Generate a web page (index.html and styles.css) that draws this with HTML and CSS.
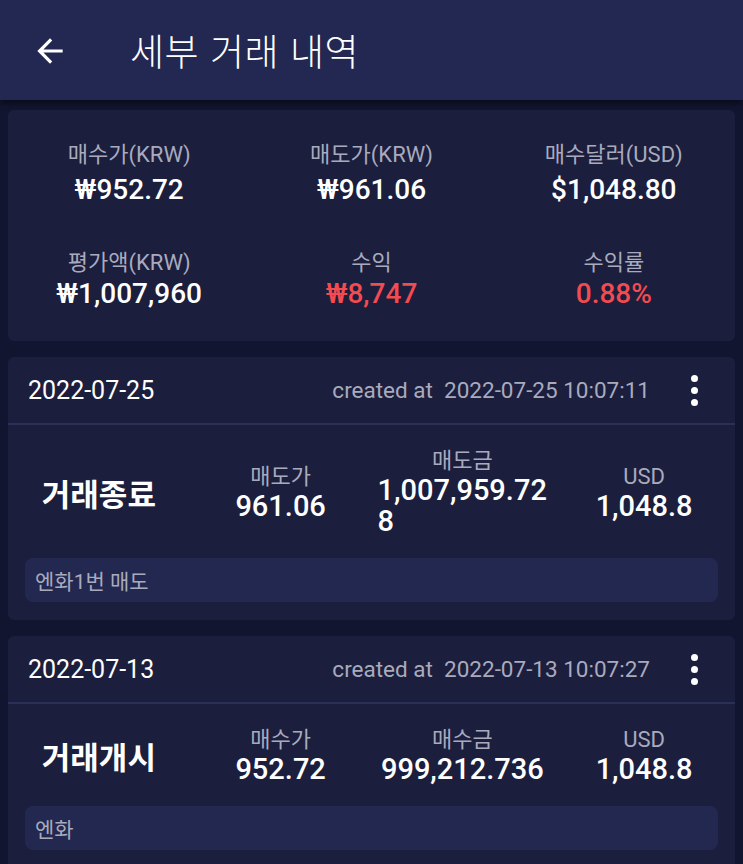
FILE: index.html
```html
<!DOCTYPE html>
<html lang="ko">
<head>
    <meta charset="UTF-8">
    <meta name="viewport" content="width=device-width, initial-scale=1.0">
    <title>세부 거래 내역</title>
    <link rel="stylesheet" href="styles.css">
</head>
<body>
    <div class="appbar">
        <svg class="back" width="38" height="38" viewBox="0 0 24 24">
            <path d="M20 11H7.83l5.59-5.59L12 4l-8 8 8 8 1.41-1.41L7.83 13H20v-2z" fill="#fff"/>
        </svg>
        <h1 class="title">세부 거래 내역</h1>
    </div>

    <div class="page">
        <div class="card summary">
            <div class="stat">
                <span class="label">매수가(KRW)</span>
                <span class="value">₩952.72</span>
            </div>
            <div class="stat">
                <span class="label">매도가(KRW)</span>
                <span class="value">₩961.06</span>
            </div>
            <div class="stat">
                <span class="label">매수달러(USD)</span>
                <span class="value">$1,048.80</span>
            </div>
            <div class="stat">
                <span class="label">평가액(KRW)</span>
                <span class="value">₩1,007,960</span>
            </div>
            <div class="stat">
                <span class="label">수익</span>
                <span class="value red">₩8,747</span>
            </div>
            <div class="stat">
                <span class="label">수익률</span>
                <span class="value red">0.88%</span>
            </div>
        </div>

        <div class="card trade">
            <div class="trade-head">
                <span class="date">2022-07-25</span>
                <span class="created">created at&nbsp; 2022-07-25 10:07:11</span>
                <span class="more"><i></i><i></i><i></i></span>
            </div>
            <div class="trade-body">
                <div class="kind">거래종료</div>
                <div class="col">
                    <span class="label">매도가</span>
                    <span class="num">961.06</span>
                </div>
                <div class="col">
                    <span class="label">매도금</span>
                    <span class="num">1,007,959.728</span>
                </div>
                <div class="col">
                    <span class="label">USD</span>
                    <span class="num">1,048.8</span>
                </div>
            </div>
            <div class="memo">엔화1번 매도</div>
        </div>

        <div class="card trade">
            <div class="trade-head">
                <span class="date">2022-07-13</span>
                <span class="created">created at&nbsp; 2022-07-13 10:07:27</span>
                <span class="more"><i></i><i></i><i></i></span>
            </div>
            <div class="trade-body">
                <div class="kind">거래개시</div>
                <div class="col">
                    <span class="label">매수가</span>
                    <span class="num">952.72</span>
                </div>
                <div class="col">
                    <span class="label">매수금</span>
                    <span class="num">999,212.736</span>
                </div>
                <div class="col">
                    <span class="label">USD</span>
                    <span class="num">1,048.8</span>
                </div>
            </div>
            <div class="memo">엔화</div>
        </div>
    </div>
</body>
</html>
```

FILE: styles.css
```css
* {
    box-sizing: border-box;
}

body {
    margin: 0;
    background: #121530;
    color: #fff;
    font-family: Roboto, "Noto Sans CJK KR", sans-serif;
}

.appbar {
    height: 100px;
    background: #222852;
    display: flex;
    align-items: center;
    padding-left: 31px;
    box-shadow: 0 4px 6px rgba(0, 0, 0, 0.45);
    position: relative;
}

.back {
    margin-top: 2px;
}

.title {
    margin: 0 0 0 61px;
    font-size: 37px;
    font-weight: 300;
    font-family: "Noto Sans CJK KR", sans-serif;
    letter-spacing: 0.5px;
}

.page {
    padding: 10px 8px;
    display: flex;
    flex-direction: column;
    gap: 16px;
}

.card {
    background: #1b1e3d;
    border-radius: 6px;
}

.summary {
    display: grid;
    grid-template-columns: repeat(3, 1fr);
    row-gap: 42px;
    padding: 31px 0 30px;
}

.stat {
    display: flex;
    flex-direction: column;
    align-items: center;
}

.label {
    color: #a9abbd;
    font-size: 22px;
    line-height: 28px;
}

.value {
    font-size: 28px;
    font-weight: 500;
    line-height: 34px;
    margin-top: 4px;
}

.stat:nth-child(n+4) .value {
    margin-top: 0;
}

.red {
    color: #f24b50;
}

.trade-head {
    height: 68px;
    display: flex;
    align-items: center;
    padding: 0 37px 0 20px;
    border-bottom: 2px solid #2b3058;
}

.date {
    font-size: 25px;
    flex: 1;
}

.created {
    font-size: 22.5px;
    color: #a9abbd;
}

.more {
    display: flex;
    flex-direction: column;
    gap: 5px;
    margin-left: 41px;
}

.more i {
    width: 7px;
    height: 7px;
    border-radius: 50%;
    background: #fff;
}

.trade-body {
    display: grid;
    grid-template-columns: repeat(4, 1fr);
    align-items: center;
    padding: 22px 0 21px;
}

.kind {
    text-align: center;
    font-family: "Noto Sans CJK KR", sans-serif;
    font-size: 31px;
    font-weight: 700;
}

.col {
    display: flex;
    flex-direction: column;
    align-items: center;
    padding: 0 6px;
}

.num {
    font-size: 29px;
    font-weight: 500;
    line-height: 31px;
    word-break: break-all;
}

.memo {
    margin: 0 17px 18px;
    height: 44px;
    border-radius: 8px;
    background: #232850;
    color: #a9abbd;
    font-size: 21px;
    padding: 0 10px;
    display: flex;
    align-items: center;
}
```
